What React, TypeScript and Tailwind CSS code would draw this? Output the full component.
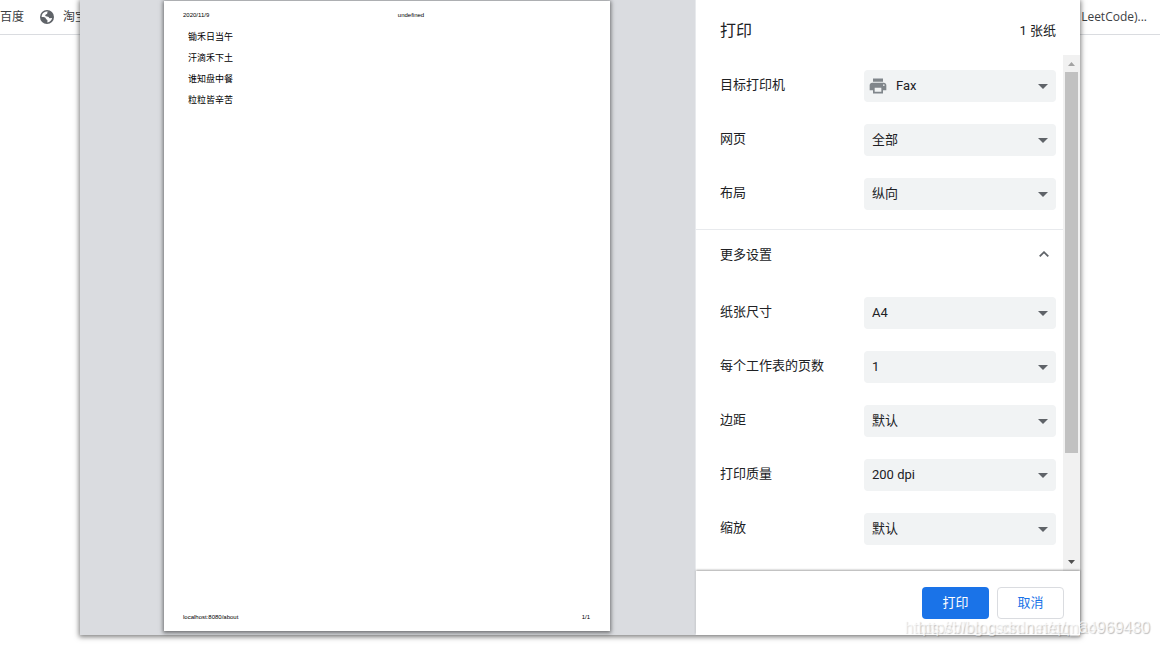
import React, { useId } from 'react';

type SettingProps = {
  label: string;
  options: string[];
  icon?: React.ReactNode;
};

function Setting({ label, options, icon }: SettingProps) {
  const id = useId();
  return (
    <div className="flex h-[54px] items-center">
      <label htmlFor={id} className="w-36 shrink-0 pb-0.5">
        {label}
      </label>
      <div className="relative flex-1">
        <select
          id={id}
          className={
            icon
              ? 'h-8 w-full appearance-none rounded bg-[#f1f3f4] pl-8 pr-7'
              : 'h-8 w-full appearance-none rounded bg-[#f1f3f4] pl-2 pr-7'
          }
        >
          {options.map((option) => (
            <option key={option}>{option}</option>
          ))}
        </select>
        {icon && <span className="pointer-events-none absolute left-1 top-1.5">{icon}</span>}
        <svg
          className="pointer-events-none absolute right-2 top-3.5"
          width="10"
          height="5"
          viewBox="0 0 10 5"
          fill="#5f6368"
          aria-hidden="true"
        >
          <path d="M0 0h10L5 5z" />
        </svg>
      </div>
    </div>
  );
}

function PrinterIcon() {
  return (
    <svg width="20" height="20" viewBox="0 0 24 24" fill="#80868b" aria-hidden="true">
      <path d="M19 8H5c-1.660 0-3 1.340-3 3v6h4v4h12v-4h4v-6c0-1.660-1.340-3-3-3zm-3 11H8v-5h8v5zm3-7c-.55 0-1-.45-1-1s.45-1 1-1 1 .45 1 1-.45 1-1 1zm-1-9H6v4h12V3z" />
    </svg>
  );
}

function GlobeIcon() {
  return (
    <svg width="16" height="16" viewBox="0 0 16 16" aria-hidden="true">
      <circle cx="8" cy="8" r="7" fill="#5f6368" />
      <path
        d="M9.500 2.700C8.300 3 8 3.800 8.300 4.800L6.800 5.600c-.8.400-.8 1.300 0 1.600l2.200.6c1 .3 1 1.200 1.600 1.500l2.500-.3c-.5 2.400-2.300 4.200-4.800 4.400l.2-2c-.1-.9-1.400-.8-1.600-1.700-.2-1-1.300-1.500-2.400-1.600L2.600 8c0-2.700 1.900-5 4.500-5.400z"
        fill="#fff"
      />
    </svg>
  );
}

function Scrollbar() {
  return (
    <div className="flex w-[17px] shrink-0 flex-col items-center bg-[#f1f1f1]" aria-hidden="true">
      <svg width="17" height="17" viewBox="0 0 17 17" fill="#a3a3a3">
        <path d="M5 11h7L8.500 7z" />
      </svg>
      <div className="flex w-full flex-1 flex-col px-0.5">
        <div className="h-[79%] bg-[#c1c1c1]" />
      </div>
      <svg width="17" height="17" viewBox="0 0 17 17" fill="#505050">
        <path d="M5 6h7l-3.500 4z" />
      </svg>
    </div>
  );
}

const poem = ['锄禾日当午', '汗滴禾下土', '谁知盘中餐', '粒粒皆辛苦'];

function Preview() {
  return (
    <section className="flex flex-1 justify-center border-r border-[#e8eaed] bg-[#dadce0] pb-1 pl-px pr-0.5 pt-px">
      <article className="flex w-[446px] flex-col bg-white px-[19px] py-2.5 font-['Liberation_Sans','Noto_Sans_CJK_SC',sans-serif] text-[6px] leading-[8px] text-black shadow-[0_1px_4px_1px_rgba(0,0,0,0.5)]">
        <header className="grid grid-cols-[1fr_auto_1fr]">
          <span>2020/11/9</span>
          <span className="pl-12">undefined</span>
          <span />
        </header>
        <div className="flex-1 pl-[5px] pt-2 text-[9px] leading-[21px]">
          {poem.map((line) => (
            <p key={line}>{line}</p>
          ))}
        </div>
        <footer className="flex justify-between pr-px">
          <span>localhost:8080/about</span>
          <span>1/1</span>
        </footer>
      </article>
    </section>
  );
}

function PrintDialog() {
  return (
    <div
      role="dialog"
      aria-label="打印"
      className="flex h-[635px] w-full max-w-[1000px] bg-white shadow-[0_1px_5px_1px_rgba(0,0,0,0.5)]"
    >
      <Preview />
      <section className="flex w-96 shrink-0 flex-col">
        <header className="flex h-[55px] items-center justify-between px-6 pt-1.5">
          <h1 className="text-base">打印</h1>
          <span>1 张纸</span>
        </header>
        <div className="flex min-h-0 flex-1">
          <div className="flex-1 overflow-hidden pt-1">
            <div className="border-b border-[#e8eaed] pb-2 pl-6 pr-[7px]">
              <Setting label="目标打印机" options={['Fax']} icon={<PrinterIcon />} />
              <Setting label="网页" options={['全部']} />
              <Setting label="布局" options={['纵向']} />
            </div>
            <button
              type="button"
              aria-expanded="true"
              className="flex h-[50px] w-full items-center justify-between pl-6 pr-3.5"
            >
              更多设置
              <svg
                width="10"
                height="8"
                viewBox="0 0 10 8"
                fill="none"
                stroke="#5f6368"
                strokeWidth="1.800"
                aria-hidden="true"
              >
                <path d="M.7 5.300L5 1.200l4.300 4.100" />
              </svg>
            </button>
            <div className="pl-6 pr-[7px] pt-1.5">
              <Setting label="纸张尺寸" options={['A4']} />
              <Setting label="每个工作表的页数" options={['1']} />
              <Setting label="边距" options={['默认']} />
              <Setting label="打印质量" options={['200 dpi']} />
              <Setting label="缩放" options={['默认']} />
            </div>
          </div>
          <Scrollbar />
        </div>
        <footer className="flex h-16 items-center justify-end gap-2 px-4 shadow-[0_-1px_2px_rgba(0,0,0,0.35)]">
          <button type="button" className="h-8 w-[67px] rounded bg-[#1a73e8] text-white">
            打印
          </button>
          <button
            type="button"
            className="h-8 w-[67px] rounded border border-[#dadce0] bg-white text-[#1a73e8]"
          >
            取消
          </button>
        </footer>
      </section>
    </div>
  );
}

export default function App() {
  return (
    <div className="relative min-h-screen overflow-hidden bg-white font-['Roboto','Noto_Sans_CJK_SC',sans-serif] text-[13px] font-normal leading-5 text-[#202124]">
      <nav className="flex h-[35px] items-center justify-between border-b border-[#dadce0] pr-[13px] font-['Open_Sans','Noto_Sans_CJK_SC',sans-serif] text-xs text-[#3c4043]">
        <div className="flex items-center">
          <a href="#baidu">百度</a>
          <a href="#taobao" className="ml-[15px] flex items-center gap-2">
            <GlobeIcon />
            淘宝
          </a>
        </div>
        <a href="#leetcode">LeetCode)...</a>
      </nav>
      <div className="absolute inset-x-0 top-0 flex justify-center px-20">
        <PrintDialog />
      </div>
      <div
        className="pointer-events-none absolute bottom-1.5 right-2.5 grid justify-items-end font-['Liberation_Sans',sans-serif] text-base text-white/60 [text-shadow:1px_1px_1px_rgba(0,0,0,0.14)]"
        aria-hidden="true"
      >
        <span className="col-start-1 row-start-1">https://blog.csdn.net/qq_34969430</span>
        <span className="col-start-1 row-start-1">https://blog.csdn.net/mao969480</span>
      </div>
    </div>
  );
}
